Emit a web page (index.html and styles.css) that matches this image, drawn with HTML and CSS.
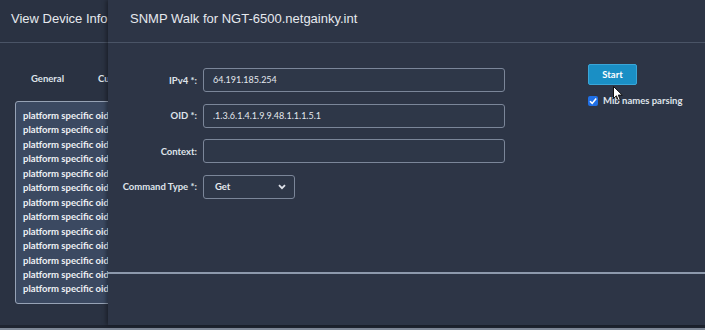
FILE: index.html
```html
<!DOCTYPE html>
<html>
<head>
<meta charset="utf-8">
<link rel="stylesheet" href="styles.css">
</head>
<body>
<div class="screen">
  <div class="page">
    <div class="page-header">View Device Info</div>
    <div class="tabs">
      <span class="tab">General</span>
      <span class="tab">Custom</span>
    </div>
    <div class="oid-box">
      <div class="oid">platform specific oid</div>
      <div class="oid">platform specific oid</div>
      <div class="oid">platform specific oid</div>
      <div class="oid">platform specific oid</div>
      <div class="oid">platform specific oid</div>
      <div class="oid">platform specific oid</div>
      <div class="oid">platform specific oid</div>
      <div class="oid">platform specific oid</div>
      <div class="oid">platform specific oid</div>
      <div class="oid">platform specific oid</div>
      <div class="oid">platform specific oid</div>
      <div class="oid">platform specific oid</div>
      <div class="oid">platform specific oid</div>
    </div>
  </div>
  <div class="bottom-edge"></div>

  <div class="modal">
    <div class="modal-header">SNMP Walk for NGT-6500.netgainky.int</div>
    <div class="modal-body">
      <div class="form">
        <label class="label">IPv4 *:</label>
        <div class="field">64.191.185.254</div>
        <label class="label">OID *:</label>
        <div class="field">.1.3.6.1.4.1.9.9.48.1.1.1.5.1</div>
        <label class="label">Context:</label>
        <div class="field"></div>
        <label class="label">Command Type *:</label>
        <div class="select">
          <span>Get</span>
          <svg class="chev" width="8" height="6" viewBox="0 0 8 6"><path d="M1 1.2 L4 4.2 L7 1.2" fill="none" stroke="#dfe3ea" stroke-width="1.8"/></svg>
        </div>
      </div>
      <div class="side">
        <button class="start">Start</button>
        <div class="check-row">
          <span class="checkbox"><svg width="10" height="10" viewBox="0 0 10 10"><path d="M2 5.2 L4.2 7.4 L8.2 2.6" fill="none" stroke="#fff" stroke-width="1.6"/></svg></span>
          <span class="check-label">Mib names parsing</span>
        </div>
      </div>
    </div>
    <div class="modal-footer"></div>
  </div>

  <svg class="cursor" width="11" height="16" viewBox="0 0 11 16"><path d="M0.5 0.5 L0.5 12.5 L3.4 9.8 L5.4 14.6 L7.3 13.8 L5.3 9.1 L9.3 9.1 Z" fill="#fff" stroke="#111" stroke-width="1"/></svg>
</div>
</body>
</html>
```
FILE: styles.css
```css
* { box-sizing: border-box; }
html, body { margin: 0; padding: 0; }
body {
  width: 705px;
  height: 330px;
  overflow: hidden;
  background: #283040;
  font-family: Lato, "Liberation Sans", sans-serif;
}
.screen {
  position: relative;
  width: 705px;
  height: 330px;
  display: flex;
  flex-direction: column;
}
.page {
  height: 325px;
  background: #2a3242;
}
.bottom-edge {
  height: 5px;
  background: #1f2531;
  border-bottom: 2px solid #7f8998;
}
.page-header {
  height: 43px;
  border-bottom: 1px solid #4a5466;
  padding: 11px 0 0 11px;
  font-family: "Liberation Sans", Arial, sans-serif;
  font-size: 13px;
  line-height: 16px;
  color: #e6e9ee;
}
.tabs {
  display: flex;
  gap: 34px;
  padding: 29px 0 0 31px;
  height: 58px;
}
.tab {
  font-size: 9.5px;
  font-weight: 700;
  color: #dfe3ea;
  line-height: 14px;
}
.oid-box {
  margin-left: 15px;
  width: 140px;
  height: 203px;
  background: #3b4961;
  border: 1px solid #96a2b5;
  border-radius: 3px;
  padding: 7px 0 0 7px;
}
.oid {
  font-size: 9.5px;
  font-weight: 700;
  color: #eef1f5;
  line-height: 14.45px;
  white-space: nowrap;
}
.modal {
  position: absolute;
  left: 108px;
  top: 0;
  right: 0;
  height: 325px;
  background: #2d3546;
  box-shadow: -2px 0 4px rgba(0,0,0,0.35);
  display: flex;
  flex-direction: column;
}
.modal-header {
  height: 43px;
  border-bottom: 1px solid #4a5466;
  padding: 11px 0 0 22px;
  font-family: "Liberation Sans", Arial, sans-serif;
  font-size: 13px;
  line-height: 16px;
  color: #e6e9ee;
}
.modal-body {
  height: 229px;
  display: flex;
  padding-top: 21px;
}
.form {
  margin-top: 4px;
  display: grid;
  grid-template-columns: 89px 302px;
  grid-auto-rows: 24px;
  column-gap: 6px;
  row-gap: 11.5px;
  align-content: start;
}
.label {
  font-size: 9.5px;
  font-weight: 700;
  color: #dfe3ea;
  text-align: right;
  align-self: center;
  white-space: nowrap;
}
.field {
  border: 1px solid #7b8699;
  border-radius: 3px;
  background: #2e3748;
  color: #e4e8ee;
  font-size: 9px;
  line-height: 22px;
  padding-left: 9px;
}
.select {
  position: relative;
  width: 92px;
  border: 1px solid #7b8699;
  border-radius: 3px;
  background: #2e3748;
  color: #e4e8ee;
  font-size: 9.5px;
  font-weight: 700;
  line-height: 22px;
  padding-left: 11px;
}
.chev {
  position: absolute;
  right: 8px;
  top: 8px;
}
.side {
  margin-left: 83px;
  display: flex;
  flex-direction: column;
  align-items: flex-start;
}
.start {
  width: 49px;
  height: 21px;
  background: #1a8fc5;
  border: 1px solid #3aa6d8;
  border-radius: 2px;
  color: #fff;
  font-family: Lato, sans-serif;
  font-size: 9.5px;
  font-weight: 700;
  padding: 0;
  line-height: 19px;
}
.check-row {
  display: flex;
  align-items: center;
  gap: 5px;
  margin-top: 10px;
}
.checkbox {
  width: 10px;
  height: 10px;
  background: #1f6fe5;
  border-radius: 2px;
  display: block;
}
.checkbox svg { display: block; }
.check-label {
  font-size: 9.5px;
  font-weight: 700;
  color: #dfe3ea;
  line-height: 12px;
}
.modal-footer {
  flex: 1;
  border-top: 2px solid #8d99ac;
}
.cursor {
  position: absolute;
  left: 613px;
  top: 86px;
}
```
